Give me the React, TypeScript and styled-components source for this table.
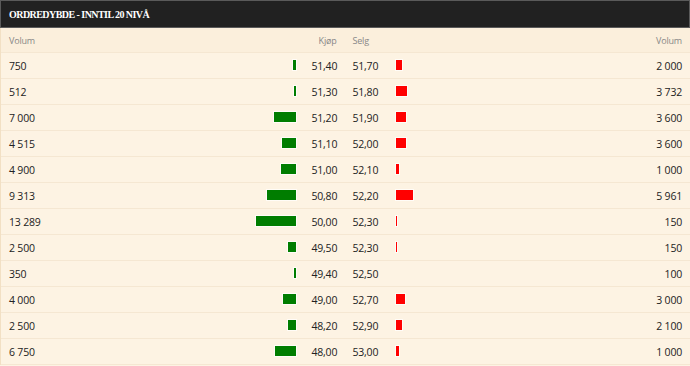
import styled, { createGlobalStyle } from "styled-components"

const GlobalStyle = createGlobalStyle`
    html, body {
        margin: 0;
        padding: 0;
        background: #fdf3e3;
    }
`

const Panel = styled.section`
    width: 690px;
    font-family: "Open Sans", "Noto Sans", sans-serif;
    color: #333;
`

const Header = styled.header`
    height: 28px;
    box-sizing: border-box;
    background: #212121;
    border: 1px solid #5a5a5a;
    display: flex;
    align-items: center;
    padding: 0 8px;
`

const Title = styled.h2`
    margin: 0;
    font-family: "Liberation Serif", serif;
    font-weight: bold;
    font-size: 10px;
    letter-spacing: -0.55px;
    color: #fff;
`

const Table = styled.div`
    border-left: 1px solid #f2e0c4;
`

const Row = styled.div<{ $head?: boolean }>`
    display: grid;
    grid-template-columns: 1fr 60px 41px 43px 60px 1fr;
    align-items: center;
    height: ${(props) => (props.$head ? "25px" : "26px")};
    box-sizing: border-box;
    border-bottom: 1px solid #f5e7d2;
    background: ${(props) => (props.$head ? "#fbefdc" : "#fdf3e3")};
    font-size: ${(props) => (props.$head ? "9px" : "10.5px")};
    color: ${(props) => (props.$head ? "#888" : "#222")};
    letter-spacing: -0.2px;
`

const Cell = styled.div<{ $align?: "left" | "right" }>`
    padding: 0 8px;
    text-align: ${(props) => props.$align || "left"};
    white-space: nowrap;
`

const BarCell = styled.div<{ $side: "buy" | "sell" }>`
    display: flex;
    justify-content: ${(props) => (props.$side === "buy" ? "flex-end" : "flex-start")};
    padding: 0 8px;
    margin-top: -2px;
`

const Bar = styled.div<{ $side: "buy" | "sell" }>`
    height: 10px;
    background: ${(props) => (props.$side === "buy" ? "#007d00" : "#ff0000")};
    box-shadow: 0 0 0 1px rgba(255, 255, 255, 0.7);
`

interface Level {
    bidVol: number
    bid: string
    ask: string
    askVol: number
}

const levels: Level[] = [
    { bidVol: 750, bid: "51,40", ask: "51,70", askVol: 2000 },
    { bidVol: 512, bid: "51,30", ask: "51,80", askVol: 3732 },
    { bidVol: 7000, bid: "51,20", ask: "51,90", askVol: 3600 },
    { bidVol: 4515, bid: "51,10", ask: "52,00", askVol: 3600 },
    { bidVol: 4900, bid: "51,00", ask: "52,10", askVol: 1000 },
    { bidVol: 9313, bid: "50,80", ask: "52,20", askVol: 5961 },
    { bidVol: 13289, bid: "50,00", ask: "52,30", askVol: 150 },
    { bidVol: 2500, bid: "49,50", ask: "52,30", askVol: 150 },
    { bidVol: 350, bid: "49,40", ask: "52,50", askVol: 100 },
    { bidVol: 4000, bid: "49,00", ask: "52,70", askVol: 3000 },
    { bidVol: 2500, bid: "48,20", ask: "52,90", askVol: 2100 },
    { bidVol: 6750, bid: "48,00", ask: "53,00", askVol: 1000 },
]

// tusenskille med hardt mellomrom
const fmt = (n: number) => n.toString().replace(/\B(?=(\d{3})+(?!\d))/g, "\u00a0")

function App() {
    const max = Math.max(...levels.map((l) => Math.max(l.bidVol, l.askVol)))
    const scale = (v: number) => (v / max) * 40

    return (
        <Panel>
            <GlobalStyle />
            <Header>
                <Title>ORDREDYBDE - INNTIL 20 NIVÅ</Title>
            </Header>
            <Table>
                <Row $head>
                    <Cell>Volum</Cell>
                    <div />
                    <Cell $align="right">Kjøp</Cell>
                    <Cell>Selg</Cell>
                    <div />
                    <Cell $align="right">Volum</Cell>
                </Row>
                {levels.map((l, i) => (
                    <Row key={i}>
                        <Cell>{fmt(l.bidVol)}</Cell>
                        <BarCell $side="buy">
                            <Bar $side="buy" style={{ width: scale(l.bidVol) }} />
                        </BarCell>
                        <Cell $align="right">{l.bid}</Cell>
                        <Cell>{l.ask}</Cell>
                        <BarCell $side="sell">
                            {l.askVol > 100 && <Bar $side="sell" style={{ width: scale(l.askVol) }} />}
                        </BarCell>
                        <Cell $align="right">{fmt(l.askVol)}</Cell>
                    </Row>
                ))}
            </Table>
        </Panel>
    )
}

export default App
